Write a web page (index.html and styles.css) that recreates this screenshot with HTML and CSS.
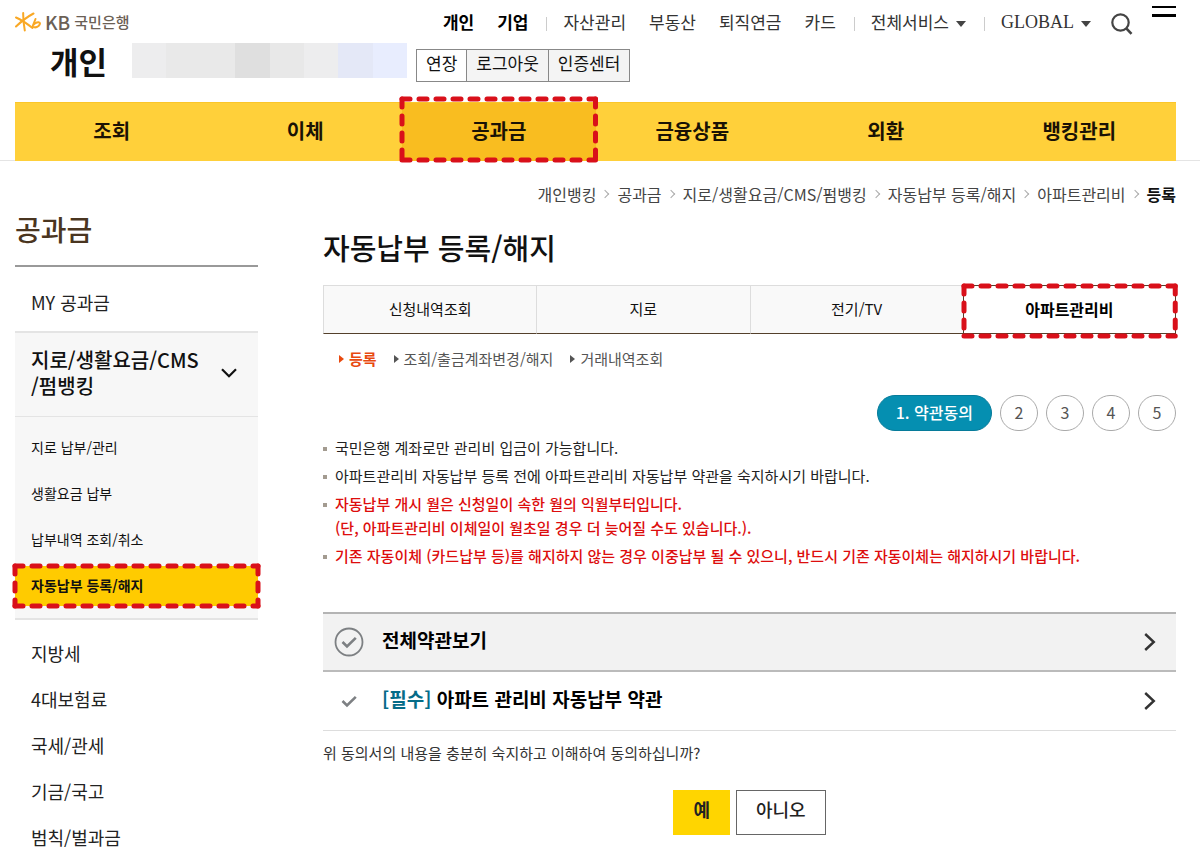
FILE: index.html
```html
<!DOCTYPE html>
<html lang="ko">
<head>
<meta charset="utf-8">
<meta name="viewport" content="width=device-width, initial-scale=1">
<title>자동납부 등록/해지</title>
<link rel="stylesheet" href="styles.css">
</head>
<body>
<header class="header">
  <div class="topbar">
    <a class="logo" href="#">
      <svg class="logo-mark" viewBox="0 0 27 20" aria-hidden="true">
        <g fill="none" stroke="#f9a825" stroke-width="2" stroke-linecap="round">
          <path d="M1 5.500 Q8 8.500 17.500 16"/>
          <path d="M8.200 1 Q8 9 9.800 18.500"/>
          <path d="M18.500 1.500 Q10 6 1 14.500"/>
          <path d="M20.500 7 L17.500 14.500 Q20.500 16.500 23.500 14 Q26.500 10.800 23.500 10.200 Q20.500 10 17.800 13.500"/>
        </g>
      </svg>
      <span class="logo-en">KB</span><span class="logo-ko">국민은행</span>
    </a>
    <nav class="gnb" aria-label="전체">
      <div class="gnb-group"><a class="on" href="#">개인</a><a class="on" href="#">기업</a></div>
      <div class="gnb-group"><a href="#">자산관리</a><a href="#">부동산</a><a href="#">퇴직연금</a><a href="#">카드</a></div>
      <div class="gnb-group"><a class="more" href="#">전체서비스</a></div>
      <div class="gnb-group"><a class="more global" href="#">GLOBAL</a></div>
    </nav>
    <button class="icon-btn search" type="button" aria-label="검색">
      <svg width="22" height="22" viewBox="0 0 22 22" fill="none" stroke="#444" stroke-width="2.200"><circle cx="9.500" cy="9.500" r="8.200"/><path d="M15.300 15.300 L20.500 20.800" stroke-width="2.600"/></svg>
    </button>
    <button class="icon-btn menu" type="button" aria-label="메뉴">
      <svg width="24" height="12" viewBox="0 0 24 12" fill="#000"><rect width="24" height="2"/><rect y="8" width="24" height="3"/></svg>
    </button>
  </div>
  <div class="userbar">
    <strong class="section-name">개인</strong>
    <span class="masked"><i></i><i></i><i></i><i></i><i></i><i></i><i></i><i></i></span>
    <div class="util"><button type="button">연장</button><button type="button">로그아웃</button><button type="button">인증센터</button></div>
  </div>
  <div class="menubar">
    <nav class="main-menu" aria-label="주메뉴">
      <a href="#">조회</a>
      <a href="#">이체</a>
      <a class="current" href="#">공과금
        <svg class="dashes" aria-hidden="true"><line x2="100%"/><line y1="100%" x2="100%" y2="100%"/><line y2="100%"/><line x1="100%" x2="100%" y2="100%"/></svg>
      </a>
      <a href="#">금융상품</a>
      <a href="#">외환</a>
      <a href="#">뱅킹관리</a>
    </nav>
  </div>
</header>

<div class="page">
  <aside class="side">
    <h2>공과금</h2>
    <a class="side-first" href="#">MY 공과금</a>
    <div class="side-open">
      <a class="side-head" href="#"><span>지로/생활요금/CMS<br>/펌뱅킹</span>
        <svg width="16" height="10" viewBox="0 0 16 10" fill="none" stroke="#111" stroke-width="2.200"><path d="M1 1.200 L8 8.200 L15 1.200"/></svg>
      </a>
      <ul class="side-sub">
        <li><a href="#">지로 납부/관리</a></li>
        <li><a href="#">생활요금 납부</a></li>
        <li><a href="#">납부내역 조회/취소</a></li>
        <li><a class="current" href="#">자동납부 등록/해지
          <svg class="dashes" aria-hidden="true"><line x2="100%"/><line y1="100%" x2="100%" y2="100%"/><line y2="100%"/><line x1="100%" x2="100%" y2="100%"/></svg></a></li>
      </ul>
    </div>
    <ul class="side-list">
      <li><a href="#">지방세</a></li>
      <li><a href="#">4대보험료</a></li>
      <li><a href="#">국세/관세</a></li>
      <li><a href="#">기금/국고</a></li>
      <li><a href="#">범칙/벌과금</a></li>
    </ul>
  </aside>

  <main class="main">
    <ol class="crumbs">
      <li><a href="#">개인뱅킹</a></li>
      <li><a href="#">공과금</a></li>
      <li><a href="#">지로/생활요금/CMS/펌뱅킹</a></li>
      <li><a href="#">자동납부 등록/해지</a></li>
      <li><a href="#">아파트관리비</a></li>
      <li><strong>등록</strong></li>
    </ol>
    <h1>자동납부 등록/해지</h1>
    <nav class="tabs" aria-label="업무">
      <a href="#">신청내역조회</a>
      <a href="#">지로</a>
      <a href="#">전기/TV</a>
      <a class="current" href="#">아파트관리비
        <svg class="dashes" aria-hidden="true"><line x2="100%"/><line y1="100%" x2="100%" y2="100%"/><line y2="100%"/><line x1="100%" x2="100%" y2="100%"/></svg>
      </a>
    </nav>
    <nav class="subtabs" aria-label="세부 업무">
      <a class="current" href="#">등록</a>
      <a href="#">조회/출금계좌변경/해지</a>
      <a href="#">거래내역조회</a>
    </nav>
    <ol class="steps">
      <li class="current">1. 약관동의</li><li>2</li><li>3</li><li>4</li><li>5</li>
    </ol>
    <ul class="notes">
      <li>국민은행 계좌로만 관리비 입금이 가능합니다.</li>
      <li>아파트관리비 자동납부 등록 전에 아파트관리비 자동납부 약관을 숙지하시기 바랍니다.</li>
      <li class="warn">자동납부 개시 월은 신청일이 속한 월의 익월부터입니다.<br>(단, 아파트관리비 이체일이 월초일 경우 더 늦어질 수도 있습니다.).</li>
      <li class="warn">기존 자동이체 (카드납부 등)를 해지하지 않는 경우 이중납부 될 수 있으니, 반드시 기존 자동이체는 해지하시기 바랍니다.</li>
    </ul>
    <form class="agree">
      <div class="term all">
        <label><input type="checkbox">
          <svg width="30" height="30" viewBox="0 0 30 30" fill="none" stroke="#7d8083"><circle cx="15" cy="15" r="13.500" stroke-width="1.800"/><path d="M8.500 15 L13 19.500 L21.800 10.800" stroke-width="2.600"/></svg>
          <span>전체약관보기</span></label>
        <button class="icon-btn" type="button" aria-label="전체약관 열기"><svg width="12" height="18" viewBox="0 0 12 18" fill="none" stroke="#333" stroke-width="2.400"><path d="M1.200 1 L9.800 9 L1.200 17"/></svg></button>
      </div>
      <div class="term">
        <label><input type="checkbox">
          <svg width="30" height="30" viewBox="0 0 30 30" fill="none" stroke="#7d8083"><path d="M8.500 15 L13 19.500 L21.800 10.800" stroke-width="2.600"/></svg>
          <span><em>[필수]</em> 아파트 관리비 자동납부 약관</span></label>
        <button class="icon-btn" type="button" aria-label="약관 열기"><svg width="12" height="18" viewBox="0 0 12 18" fill="none" stroke="#333" stroke-width="2.400"><path d="M1.200 1 L9.800 9 L1.200 17"/></svg></button>
      </div>
      <p class="question">위 동의서의 내용을 충분히 숙지하고 이해하여 동의하십니까?</p>
      <div class="actions"><button class="yes" type="button">예</button><button type="button">아니오</button></div>
    </form>
  </main>
</div>
</body>
</html>
```

FILE: styles.css
```css
* { box-sizing: border-box; }
body { margin: 0; background: #fff; color: #222; font-family: "Noto Sans CJK KR", sans-serif; font-size: 16px; line-height: 24px; }
a { color: inherit; text-decoration: none; }
ul, ol { list-style: none; margin: 0; padding: 0; }
h1, h2, p { margin: 0; }
button { font: inherit; color: inherit; cursor: pointer; }
svg { display: block; flex: none; }
.icon-btn { border: 0; padding: 0; background: none; }

.topbar { display: flex; align-items: center; padding: 4px 24px 0 15px; height: 40px; }
.logo { display: flex; align-items: center; color: #6b6055; font-weight: 500; white-space: nowrap; }
.logo-mark { width: 27px; height: 20px; }
.logo-en { margin-left: 3px; font-size: 19px; }
.logo-ko { margin-left: 4px; font-size: 15px; }
.gnb { display: flex; margin-left: auto; font-size: 17px; color: #333; white-space: nowrap; }
.gnb-group { display: flex; gap: 23px; }
.gnb-group + .gnb-group { margin-left: 18px; padding-left: 17px; background: linear-gradient(#ccc, #ccc) 0 7px / 1px 14px no-repeat; }
.gnb .on { color: #000; font-weight: 700; }
.gnb .more { display: flex; align-items: center; gap: 7px; }
.gnb .more::after { content: ""; margin-top: 4px; border: 5px solid transparent; border-top: 6px solid #444; border-bottom: 0; }
.gnb .global { font-family: "Liberation Serif", serif; font-size: 18px; }
.search { margin-left: 20px; margin-top: 4px; }
.menu { margin-left: 19px; align-self: flex-start; margin-top: 2px; }

.userbar { display: flex; align-items: flex-start; height: 62px; padding: 3px 24px 0 50px; }
.section-name { width: 82px; font-size: 31px; line-height: 36px; color: #111; }
.masked { display: flex; width: 275px; height: 35px; }
.masked i { flex: 1; background: #ededee; }
.masked i:nth-child(2), .masked i:nth-child(3) { background: #e9e9e9; }
.masked i:nth-child(4) { background: #dfdfdf; }
.masked i:nth-child(5) { background: #e8e8e8; }
.masked i:nth-child(7) { background: #e4e8f7; }
.masked i:nth-child(8) { background: #e8edfe; }
.util { display: flex; margin: 6px 0 0 9px; }
.util button { border: 1px solid #888; padding: 1px 9px 6px; background: #f4f4f4; color: #111; font-size: 17px; }
.util button + button { border-left: 0; }
.util button:first-child { background: #fff; }

.menubar { padding: 0 24px 0 15px; background: linear-gradient(#e4e4e4, #e4e4e4) 0 100% / 100% 1px no-repeat; }
.main-menu { display: grid; grid-template-columns: repeat(6, 1fr); background: #ffd03a; border-top: 1px solid #fbc62a; }
.main-menu a { position: relative; padding: 13px 0 15px; text-align: center; font-size: 20px; line-height: 30px; font-weight: 700; color: #1a1205; }
.main-menu .current { background: #f9bd20; }
.dashes { position: absolute; inset: 0; width: 100%; height: 100%; overflow: visible; stroke: #d9101a; stroke-width: 5; stroke-linecap: round; stroke-dasharray: 8 9; }
.main-menu .dashes { inset: -4px 0 0; height: calc(100% + 3px); }

.page { display: flex; gap: 65px; padding: 0 24px 0 15px; }
.side { flex: none; width: 243px; padding-top: 48px; }
.side h2 { padding-bottom: 16px; border-bottom: 2px solid #999; font-size: 28px; line-height: 40px; font-weight: 500; color: #4a3520; }
.side-first { display: block; padding: 19px 16px 13px; font-size: 18px; line-height: 32px; }
.side-open { border-top: 2px solid #e4e4e4; border-bottom: 2px solid #e4e4e4; padding-bottom: 12px; background: #f7f7f7; }
.side-head { display: flex; justify-content: space-between; align-items: center; padding: 14px 21px 17px 16px; border-bottom: 1px solid #e4e4e4; font-size: 20px; line-height: 26px; font-weight: 500; color: #111; }
.side-sub { display: grid; gap: 6px; padding-top: 11px; }
.side-sub a { position: relative; display: block; padding: 0 16px 2px; font-size: 14px; line-height: 38px; color: #111; }
.side-sub .current { background: #ffcb00; font-weight: 700; }
.side-list { margin-top: 10px; font-size: 18px; line-height: 46px; padding-left: 16px; }
.side-first, .side-list { color: #222; }

.main { flex: 1; min-width: 0; }
.crumbs { display: flex; justify-content: flex-end; padding: 21px 0 1px; color: #444; white-space: nowrap; }
.crumbs li + li { display: flex; align-items: center; }
.crumbs li + li::before { content: ""; width: 5px; height: 5px; margin: 0 9px 0 6px; border: solid #aaa; border-width: 1px 1px 0 0; transform: rotate(45deg); }
.crumbs strong { color: #111; }
h1 { margin-top: 19px; font-size: 29px; line-height: 42px; font-weight: 500; color: #111; }
.tabs { display: grid; grid-template-columns: repeat(4, 1fr); margin-top: 17px; }
.tabs a { position: relative; padding: 11px 0 12px; border: 1px solid #ddd; border-right: 0; border-bottom-color: #54402b; background: #f9f9f9; text-align: center; font-size: 15px; color: #111; }
.tabs .current { border: 1px solid #54402b; background: #fff; font-size: 16px; font-weight: 700; color: #000; }
.tabs .dashes { height: calc(100% + 3px); }
.subtabs { display: flex; gap: 17px; padding: 13px 16px 0; font-size: 15px; color: #555; }
.subtabs a { display: flex; align-items: center; gap: 5px; }
.subtabs a::before { content: ""; border: 4px solid transparent; border-left: 5px solid currentColor; border-right: 0; }
.subtabs .current { font-weight: 700; color: #e8490f; }
.steps { display: flex; justify-content: flex-end; gap: 8px; margin-top: 24px; }
.steps li { min-width: 38px; padding: 4px 0 6px; border: 1px solid #aaa; border-radius: 19px; text-align: center; color: #555; }
.steps .current { padding: 4px 18px 6px; border-color: #067b9a; background: #058fb1; color: #fff; font-weight: 500; }
.notes { display: grid; gap: 4px; margin-top: 5px; font-size: 15px; }
.notes li { padding-left: 12px; color: #222; background: linear-gradient(#a39b90, #a39b90) 0 11px / 4px 4px no-repeat; }
.notes .warn { color: #dd0d0d; font-weight: 500; }

.agree { margin-top: 44px; }
.term { display: flex; justify-content: space-between; align-items: center; padding: 14px 20px 14px 11px; border-bottom: 1px solid #ddd; }
.term.all { border-top: 2px solid #b4b4b4; border-bottom: 2px solid #bbb; padding: 13px 20px 13px 11px; background: #f2f2f2; }
.term label { position: relative; display: flex; align-items: center; gap: 18px; cursor: pointer; }
.term input { position: absolute; width: 30px; height: 30px; margin: 0; opacity: 0; }
.term span { padding-bottom: 4px; font-size: 19px; line-height: 26px; font-weight: 700; color: #000; }
.term em { font-style: normal; color: #056c88; }
.question { padding-top: 10px; font-size: 15px; color: #333; }
.actions { display: flex; justify-content: center; gap: 6px; margin-top: 25px; }
.actions button { padding: 5px 19px 12px; border: 1px solid #666; background: #fff; font-size: 18px; line-height: 26px; font-weight: 500; color: #222; }
.actions .yes { border-color: #ffd500; background: #ffd500; font-weight: 700; }
```
